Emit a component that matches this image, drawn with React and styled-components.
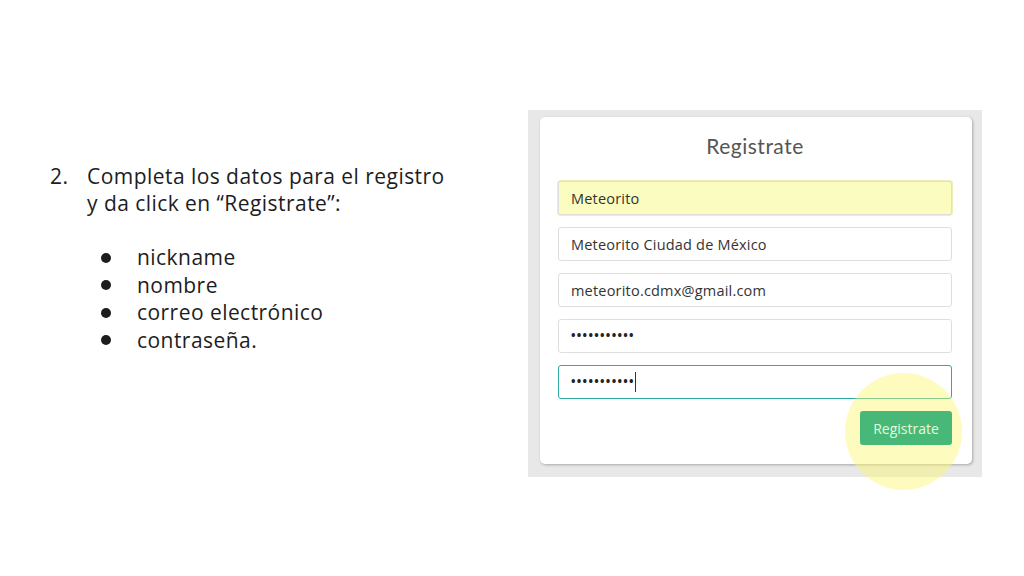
import React from 'react';
import styled, { createGlobalStyle } from 'styled-components';

const Global = createGlobalStyle`
	html, body {
		margin: 0;
		padding: 0;
		background: #ffffff;
	}
	body {
		width: 1024px;
		height: 576px;
		overflow: hidden;
	}
`;

const textColor = '#1d1d1d';
const fieldFont = `'Open Sans', 'Noto Sans', sans-serif`;

const Slide = styled.div`
	width: 1024px;
	height: 576px;
	display: flex;
	align-items: flex-start;
	box-sizing: border-box;
	padding: 110px 42px 0 50px;
`;

const Steps = styled.ol`
	margin: 53px 0 0 0;
	padding: 0;
	list-style: none;
	width: 478px;
	font-family: 'Open Sans', 'Noto Sans', sans-serif;
	font-size: 21px;
	letter-spacing: 0.45px;
	line-height: 27px;
	color: ${textColor};
`;

const Step = styled.li`
	display: flex;
`;

const StepNumber = styled.span`
	width: 37px;
	flex: none;
`;

const StepBody = styled.div`
	flex: 1;
`;

const Bullets = styled.ul`
	margin: 27px 0 0 0;
	padding: 0;
	list-style: none;
	line-height: 27.5px;
`;

const Bullet = styled.li`
	display: flex;
	align-items: center;
	&::before {
		content: '';
		width: 10px;
		height: 10px;
		border-radius: 50%;
		background: ${textColor};
		margin-left: 14px;
		margin-right: 26px;
		flex: none;
	}
`;

const Panel = styled.div`
	position: relative;
	width: 454px;
	height: 367px;
	box-sizing: border-box;
	background: #e8e8e8;
	padding: 7px 10px 13px 12px;
`;

const Card = styled.form`
	height: 100%;
	box-sizing: border-box;
	background: #ffffff;
	border-radius: 5px;
	box-shadow: 1px 1px 3px rgba(0, 0, 0, 0.28);
	padding: 14px 20px 0 18px;
	display: flex;
	flex-direction: column;
	gap: 12px;
`;

const Title = styled.h2`
	margin: 0 0 8px 0;
	text-align: center;
	font-family: 'Lato', 'Noto Sans', sans-serif;
	font-weight: 400;
	font-size: 21px;
	letter-spacing: 0.5px;
	line-height: 30px;
	color: #555555;
`;

const Field = styled.div`
	height: 34px;
	box-sizing: border-box;
	border-radius: 3px;
	border: 1px solid ${(p) => (p.$focus ? '#2fa8a8' : '#dedede')};
	background: ${(p) => (p.$filled ? '#fafcc0' : '#ffffff')};
	box-shadow: ${(p) => (p.$filled ? '0 0 0 1px #efefb8' : 'none')};
	display: flex;
	align-items: center;
	padding: 0 12px;
	font-family: ${fieldFont};
	font-size: 14.5px;
	letter-spacing: 0.2px;
	color: #333333;
`;

const Dots = styled.span`
	font-size: 12px;
	letter-spacing: 1.3px;
	color: #222222;
	font-weight: 700;
	line-height: 1;
`;

const Caret = styled.span`
	display: inline-block;
	width: 1px;
	height: 20px;
	background: #333333;
`;

const Actions = styled.div`
	display: flex;
	justify-content: flex-end;
`;

const SubmitButton = styled.button`
	position: relative;
	z-index: 2;
	width: 92px;
	height: 34px;
	border: none;
	border-radius: 3px;
	background: #47b877;
	color: #e9f8dc;
	font-family: ${fieldFont};
	font-size: 14px;
	padding: 0;
`;

const Highlight = styled.div`
	position: absolute;
	z-index: 1;
	left: 317px;
	top: 263px;
	width: 117px;
	height: 117px;
	border-radius: 50%;
	background: rgba(250, 246, 110, 0.45);
	pointer-events: none;
`;

const password = '•••••••••••';

export default function App() {
	return (
		<Slide>
			<Global />
			<Steps>
				<Step>
					<StepNumber>2.</StepNumber>
					<StepBody>
						Completa los datos para el registro
						<br />
						y da click en “Registrate”:
						<Bullets>
							<Bullet>nickname</Bullet>
							<Bullet>nombre</Bullet>
							<Bullet>correo electrónico</Bullet>
							<Bullet>contraseña.</Bullet>
						</Bullets>
					</StepBody>
				</Step>
			</Steps>
			<Panel>
				<Card>
					<Title>Registrate</Title>
					<Field $filled>Meteorito</Field>
					<Field>Meteorito Ciudad de México</Field>
					<Field>meteorito.cdmx@gmail.com</Field>
					<Field>
						<Dots>{password}</Dots>
					</Field>
					<Field $focus>
						<Dots>{password}</Dots>
						<Caret />
					</Field>
					<Actions>
						<SubmitButton type="button">Registrate</SubmitButton>
					</Actions>
				</Card>
				<Highlight />
			</Panel>
		</Slide>
	);
}
